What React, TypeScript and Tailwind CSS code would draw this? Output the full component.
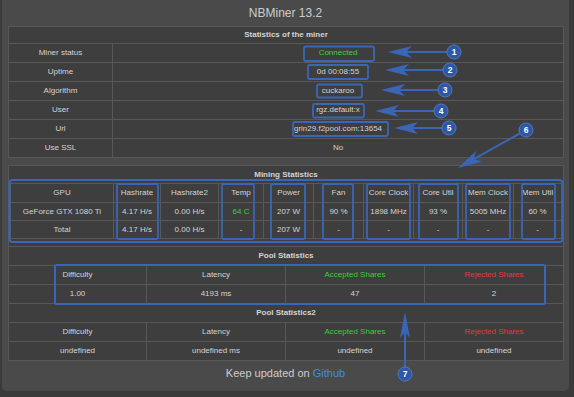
import React from 'react';

const line = 'border-[#585858]';

interface Arrow {
  n: number;
  cx: number;
  cy: number;
  tx: number;
  ty: number;
}

const arrows: Arrow[] = [
  { n: 1, cx: 454, cy: 52, tx: 388, ty: 52 },
  { n: 2, cx: 450, cy: 70, tx: 385, ty: 70 },
  { n: 3, cx: 445, cy: 90, tx: 381, ty: 90 },
  { n: 4, cx: 441, cy: 111, tx: 375, ty: 111 },
  { n: 5, cx: 449, cy: 128, tx: 394, ty: 128 },
  { n: 6, cx: 526, cy: 130, tx: 458, ty: 168 },
  { n: 7, cx: 405, cy: 374, tx: 405, ty: 312 },
];

// [x, y, w, h]
const boxes: number[][] = [
  [304, 46.5, 70, 14.5],
  [308, 65, 60, 14],
  [317, 84.5, 45, 13],
  [313, 104, 51, 13.5],
  [293, 122, 95, 14],
  [117, 184, 41, 55],
  [222, 184, 32, 55],
  [271, 184, 34, 55],
  [323, 184, 30, 55],
  [367, 184, 43, 55],
  [419, 184, 39, 55],
  [466, 184, 44, 55],
  [522, 184, 33, 55],
];

function Annotations() {
  const blue = '#3a66b8';
  return (
    <svg className="absolute left-0 top-0 pointer-events-none" width={574} height={397} viewBox="0 0 574 397">
      {boxes.map(([x, y, w, h], i) => (
        <rect key={i} x={x} y={y} width={w} height={h} rx={1.5} fill="none" stroke={blue} strokeWidth={1.8} />
      ))}
      <rect x={9.5} y={180} width={553} height={62} rx={3} fill="none" stroke={blue} strokeWidth={2} />
      <rect x={55} y={265} width={490} height={39} rx={1.5} fill="none" stroke={blue} strokeWidth={2} />
      {arrows.map(a => {
        const dx = a.cx - a.tx;
        const dy = a.cy - a.ty;
        const len = Math.hypot(dx, dy);
        const ux = dx / len;
        const uy = dy / len;
        const px = -uy;
        const py = ux;
        const head = a.n === 7 ? 26 : 24;
        const half = a.n === 7 ? 5 : 6;
        const notch = head - 6;
        const bx = a.tx + ux * head;
        const by = a.ty + uy * head;
        const nx = a.tx + ux * notch;
        const ny = a.ty + uy * notch;
        const pts = [
          `${a.tx},${a.ty}`,
          `${bx + px * half},${by + py * half}`,
          `${nx},${ny}`,
          `${bx - px * half},${by - py * half}`,
        ].join(' ');
        return (
          <g key={a.n}>
            <line x1={nx} y1={ny} x2={a.cx - ux * 7} y2={a.cy - uy * 7} stroke={blue} strokeWidth={2} />
            <polygon points={pts} fill={blue} />
            <circle cx={a.cx} cy={a.cy} r={7} fill="#2c58a6" stroke="#5a82c8" strokeWidth={0.8} />
            <text x={a.cx} y={a.cy + 3} textAnchor="middle" fontSize={8.5} fontWeight="bold" fill="#ffffff" fontFamily="Liberation Sans, Arial, sans-serif">
              {a.n}
            </text>
          </g>
        );
      })}
    </svg>
  );
}

const minerRows: [string, string, string?][] = [
  ['Miner status', 'Connected', 'text-[#3fce3f]'],
  ['Uptime', '0d 00:08:55'],
  ['Algorithm', 'cuckaroo'],
  ['User', 'rgz.default:x'],
  ['Url', 'grin29.f2pool.com:13654'],
  ['Use SSL', 'No'],
];

const gpuWidths = ['w-[103px]', 'w-[47px]', 'w-[58px]', 'w-[45px]', 'w-[50px]', 'w-[50px]', 'w-[50px]', 'w-[49px]', 'w-[51px]', 'flex-1'];

const gpuRows: string[][] = [
  ['GPU', 'Hashrate', 'Hashrate2', 'Temp', 'Power', 'Fan', 'Core Clock', 'Core Util', 'Mem Clock', 'Mem Util'],
  ['GeForce GTX 1080 Ti', '4.17 H/s', '0.00 H/s', '64 C', '207 W', '90 %', '1898 MHz', '93 %', '5005 MHz', '60 %'],
  ['Total', '4.17 H/s', '0.00 H/s', '-', '207 W', '-', '-', '-', '-', '-'],
];

const poolWidths = ['w-[138px]', 'w-[139px]', 'w-[139px]', 'flex-1'];

function PoolHead() {
  const labels = ['Difficulty', 'Latency', 'Accepted Shares', 'Rejected Shares'];
  const colors = ['', '', 'text-[#3fc83f]', 'text-[#e0393c]'];
  return (
    <div className={`flex h-[19px] border-t ${line}`}>
      {labels.map((l, i) => (
        <div key={l} className={`${poolWidths[i]} ${colors[i]} ${i < 3 ? `border-r ${line}` : ''} flex items-center justify-center`}>
          {l}
        </div>
      ))}
    </div>
  );
}

function PoolRow({ values }: { values: string[] }) {
  return (
    <div className={`flex h-[19px] border-t ${line}`}>
      {values.map((v, i) => (
        <div key={i} className={`${poolWidths[i]} ${i < 3 ? `border-r ${line}` : ''} flex items-center justify-center`}>
          {v}
        </div>
      ))}
    </div>
  );
}

export default function App() {
  return (
    <div className="relative w-[574px] h-[397px] overflow-hidden bg-[#3a3a3a] font-['Liberation_Sans',Arial,sans-serif] text-[#d4d4d4]">
      <div className="ml-[2px] w-[567px] h-[391px] rounded-b-[5px] bg-[#4a4a4a] px-[6px]">
        <div className="h-[26px] flex items-center justify-center text-[12px] text-[#cdcdcd]">NBMiner 13.2</div>

        {/* Statistics of the miner */}
        <div className={`w-[556px] border ${line} bg-[#3e3e3e] text-[8px] leading-none`}>
          <div className="h-[16px] flex items-center justify-center font-bold">Statistics of the miner</div>
          {minerRows.map(([k, v, c]) => (
            <div key={k} className={`flex h-[19px] border-t ${line}`}>
              <div className={`w-[104px] border-r ${line} flex items-center justify-center`}>{k}</div>
              <div className={`flex-1 flex items-center justify-center ${c ?? ''}`}>{v}</div>
            </div>
          ))}
        </div>

        {/* Mining + pools */}
        <div className={`mt-[7px] w-[556px] border ${line} bg-[#3e3e3e] text-[8px] leading-none`}>
          <div className="h-[17px] flex items-center justify-center font-bold">Mining Statistics</div>
          <div className="px-[1px] pb-[7px]">
            <div className={`border ${line}`}>
              {gpuRows.map((row, r) => (
                <div key={r} className={`flex ${r === 0 ? 'h-[18px]' : `h-[18px] border-t ${line}`}`}>
                  {row.map((v, i) => (
                    <div
                      key={i}
                      className={`${gpuWidths[i]} ${i < 9 ? `border-r ${line}` : ''} flex items-center justify-center whitespace-nowrap ${r === 1 && i === 3 ? 'text-[#3fce3f]' : ''}`}
                    >
                      {v}
                    </div>
                  ))}
                </div>
              ))}
            </div>
          </div>

          <div className={`h-[19px] border-t ${line} flex items-center justify-center font-bold`}>Pool Statistics</div>
          <PoolHead />
          <PoolRow values={['1.00', '4193 ms', '47', '2']} />

          <div className={`h-[19px] border-t ${line} flex items-center justify-center font-bold`}>Pool Statistics2</div>
          <PoolHead />
          <PoolRow values={['undefined', 'undefined ms', 'undefined', 'undefined']} />
        </div>

        <div className="h-[25px] flex items-center justify-center text-[11px] text-[#cdcdcd]">
          Keep updated on&nbsp;<span className="text-[#3d8ee0]">Github</span>
        </div>
      </div>
      <Annotations />
    </div>
  );
}
